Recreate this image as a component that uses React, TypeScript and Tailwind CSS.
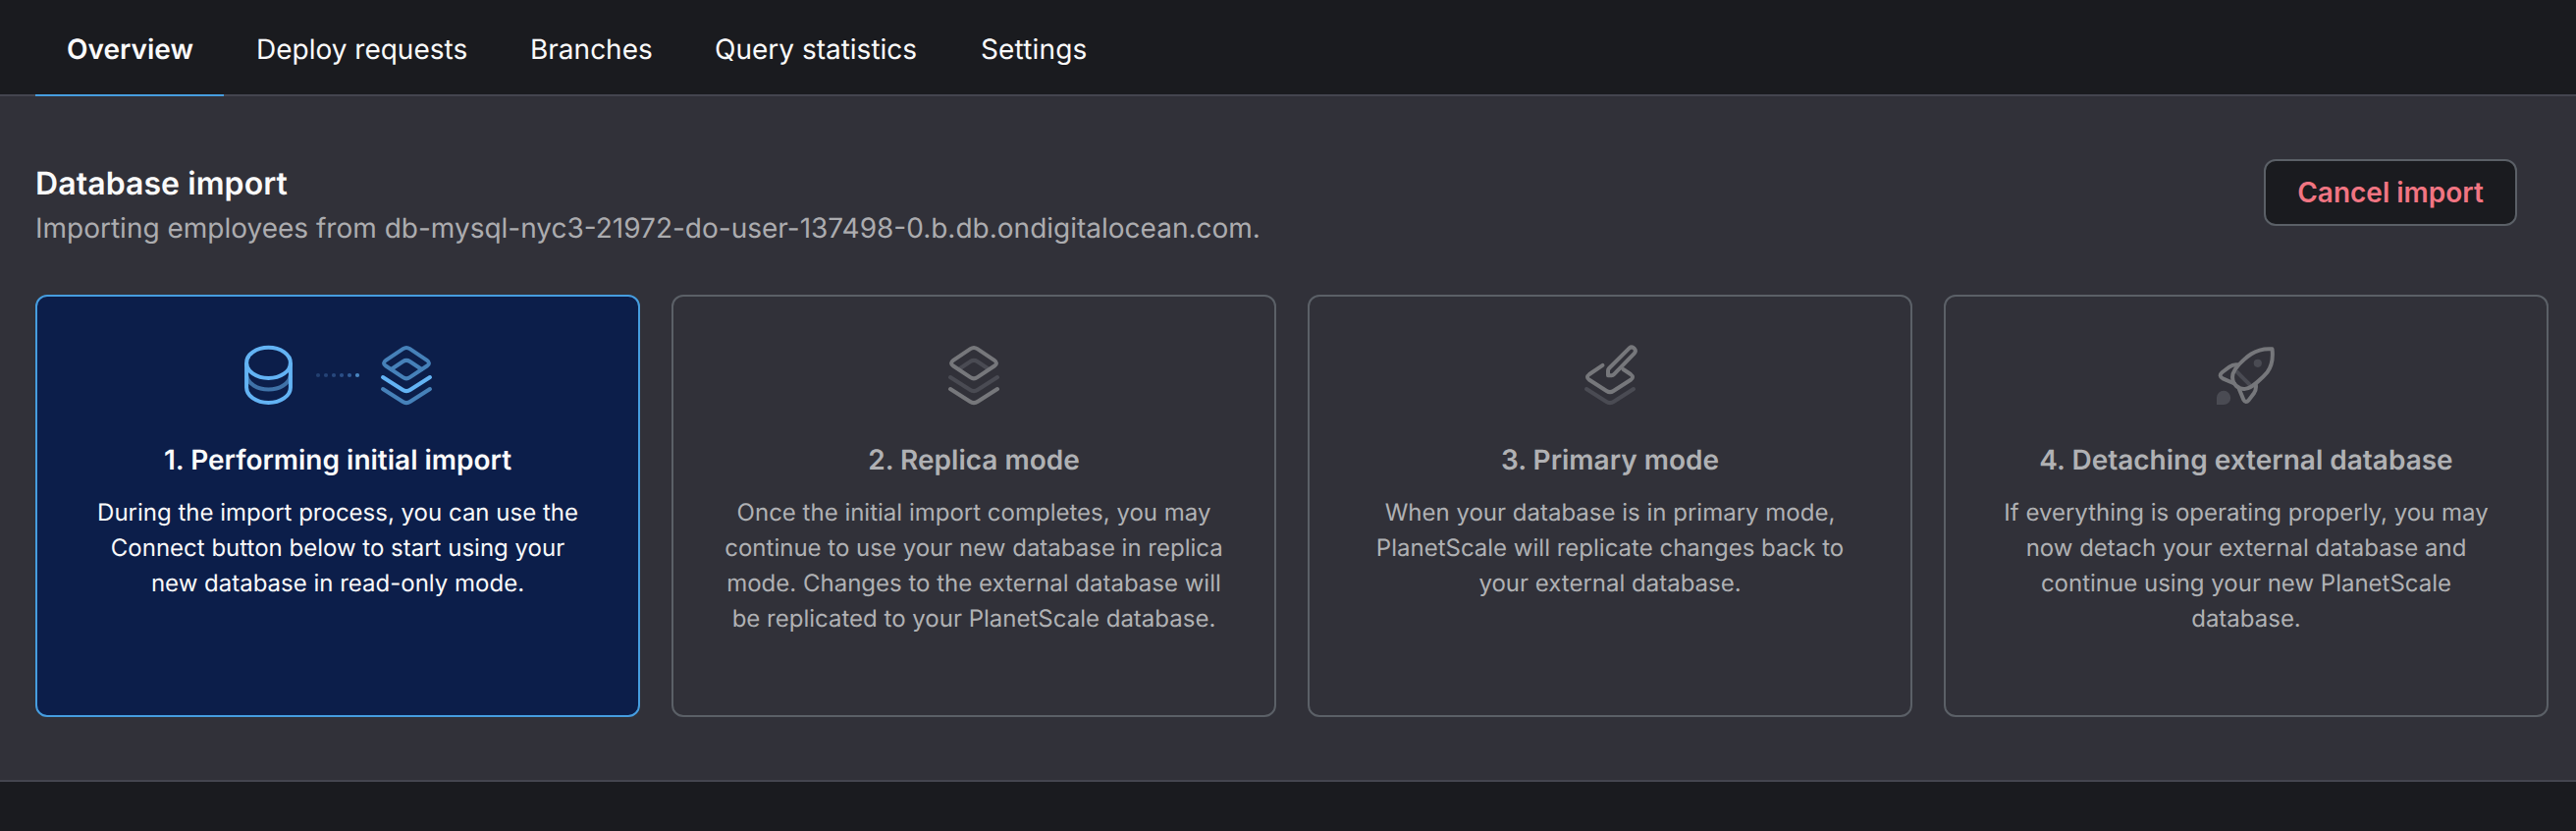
import type { ReactNode } from "react";

const tabs = [
  { label: "Overview", className: "mr-px w-48 border-b-2 border-[#469ddf] font-semibold" },
  { label: "Deploy requests", className: "w-[279px]" },
  { label: "Branches", className: "w-[188px]" },
  { label: "Query statistics", className: "w-[271px]" },
  { label: "Settings", className: "tracking-[0.15px]" },
];

function Layers({ top, inner, middle, bottom }: { top: string; inner: string; middle: string; bottom: string }) {
  return (
    <g fill="none" strokeWidth="4" strokeLinecap="round" strokeLinejoin="round">
      <path stroke={inner} d="M16.5 26L28.5 18Q32 15.8 35.5 18L47.5 26" />
      <path
        stroke={top}
        d="M28.5 5.2Q32 2.9 35.5 5.2L53 16.9Q57 19.7 53 22.5L35.5 34.2Q32 36.5 28.5 34.2L11 22.5Q7 19.7 11 16.9Z"
      />
      <path stroke={middle} d="M8 34L28 46.8Q32 49.4 36 46.8L56 34" />
      <path stroke={bottom} d="M8 46L28 58.8Q32 61.4 36 58.8L56 46" />
    </g>
  );
}

const dots = ["#233f70", "#254376", "#28487d", "#2b4f87", "#315b95", "#4a87c2"];

function ImportIcon() {
  return (
    <svg className="h-16 w-52" viewBox="0 0 208 64" fill="none">
      <path d="M11.3 32.5A22.3 15.5 0 0 0 55.7 32.5" stroke="#3f72a8" strokeWidth="4" />
      <ellipse cx="33.5" cy="19.4" rx="22.4" ry="15.6" stroke="#63b3f4" strokeWidth="4" />
      <path d="M11.1 19.4V44.5A22.4 15.5 0 0 0 55.9 44.5V19.4" stroke="#63b3f4" strokeWidth="4" />
      {dots.map((color, i) => (
        <circle key={color} cx={84 + i * 8} cy="32" r="2.1" fill={color} />
      ))}
      <g transform="translate(142 0)">
        <Layers top="#4681b9" inner="#4681b9" middle="#63b3f4" bottom="#4681b9" />
      </g>
    </svg>
  );
}

function ReplicaIcon() {
  return (
    <svg className="size-16" viewBox="0 0 64 64">
      <Layers top="#76777b" inner="#4a4b53" middle="#4a4b53" bottom="#76777b" />
    </svg>
  );
}

function PrimaryIcon() {
  return (
    <svg className="size-16" viewBox="0 0 64 64" fill="none" strokeWidth="4" strokeLinecap="round" strokeLinejoin="round">
      <path stroke="#4a4b53" d="M8 46L28 58.8Q32 61.4 36 58.8L56 46" />
      <path
        stroke="#76777b"
        d="M24.5 21.9L11 31Q7 34 11 36.8L28.5 48Q32 50.3 35.5 48L53 36.8Q57 34 53 31L45.5 26"
      />
      <path
        stroke="#76777b"
        d="M30 32.3V27.4Q30 26 31 25L51.7 4.4A3.7 3.7 0 0 1 56.9 9.6L36 31.2Q35 32.3 33.7 32.3Z"
      />
    </svg>
  );
}

function RocketIcon() {
  return (
    <svg className="size-16" viewBox="0 0 64 64" fill="none" strokeWidth="4" strokeLinecap="round" strokeLinejoin="round">
      <path stroke="#4a4b53" d="M22.5 28.5L35.5 41.5" />
      <circle cx="43.8" cy="19.8" r="4.1" fill="#4a4b53" />
      <path d="M2 62V54.8A7.1 7.1 0 1 1 9.1 62Z" fill="#4a4b53" />
      <g stroke="#76777b">
        <path d="M58.5 5.3C50 4.6 43 6.6 37 10.5C32 13.8 24 21 20.8 26C17.8 30.5 17.5 36 19.6 40C22 44.5 28 47.2 34 45.2C38.5 43.7 49 34.5 53.5 29C58.5 22.5 59.6 15 58.5 5.3Z" />
        <path d="M24 21.4C20.5 20.8 17.5 21.6 14.8 23.6L7.6 29Q3.4 32.5 8.2 35.3L20 40.5" />
        <path d="M24.2 44.6L29.4 57Q31.6 60.8 34.6 57.4L40 50.2C42 47.3 42.4 44.5 41.7 41" />
      </g>
    </svg>
  );
}

const steps: { title: string; lines: string[]; icon: ReactNode }[] = [
  {
    title: "1. Performing initial import",
    lines: [
      "During the import process, you can use the",
      "Connect button below to start using your",
      "new database in read-only mode.",
    ],
    icon: <ImportIcon />,
  },
  {
    title: "2. Replica mode",
    lines: [
      "Once the initial import completes, you may",
      "continue to use your new database in replica",
      "mode. Changes to the external database will",
      "be replicated to your PlanetScale database.",
    ],
    icon: <ReplicaIcon />,
  },
  {
    title: "3. Primary mode",
    lines: [
      "When your database is in primary mode,",
      "PlanetScale will replicate changes back to",
      "your external database.",
    ],
    icon: <PrimaryIcon />,
  },
  {
    title: "4. Detaching external database",
    lines: [
      "If everything is operating properly, you may",
      "now detach your external database and",
      "continue using your new PlanetScale",
      "database.",
    ],
    icon: <RocketIcon />,
  },
];

export default function App() {
  return (
    <div className="h-[846px] w-full overflow-hidden bg-[#1a1b1f] font-['Inter',sans-serif] text-[#fafafa] antialiased [text-rendering:geometricPrecision]">
      <nav className="flex h-[98px] border-b-2 border-[#44454f] pl-9">
        {tabs.map((tab) => (
          <a
            key={tab.label}
            className={`-mb-0.5 shrink-0 pt-[29px] pl-8 text-[28px] leading-[42px] whitespace-nowrap ${tab.className}`}
          >
            {tab.label}
          </a>
        ))}
      </nav>
      <section className="h-[698px] border-b-2 border-[#44454f] bg-[#313139] pt-16 pr-7 pl-9">
        <header className="flex h-[138px] items-start justify-between pr-8">
          <div className="pt-px">
            <h1 className="text-[32px] leading-[48px] font-semibold tracking-[0.08px]">Database import</h1>
            <p className="text-[28px] leading-[42px] text-[#acacaf]">
              Importing employees from db-mysql-nyc3-21972-do-user-137498-0.b.db.ondigitalocean.com.
            </p>
          </div>
          <button className="h-[68px] w-[258px] rounded-xl border-2 border-[#5b6067] bg-[#1a1b1f] text-[28px] font-semibold text-[#f17582]">
            Cancel import
          </button>
        </header>
        <div className="grid grid-cols-4 gap-8">
          {steps.map((step, i) => (
            <article
              key={step.title}
              className={
                i === 0
                  ? "flex h-[430px] flex-col items-center rounded-xl border-2 border-[#469ddf] bg-[#0c1e4a] pt-12 text-center"
                  : "flex h-[430px] flex-col items-center rounded-xl border-2 border-[#5b6067] pt-12 text-center text-[#b0b1b4]"
              }
            >
              {step.icon}
              <h2 className="mt-[33px] text-[28px] leading-[42px] font-semibold">{step.title}</h2>
              <p className="mt-[15px] text-2xl leading-9">
                {step.lines.map((line) => (
                  <span key={line} className="block whitespace-nowrap">
                    {line}
                  </span>
                ))}
              </p>
            </article>
          ))}
        </div>
      </section>
    </div>
  );
}
